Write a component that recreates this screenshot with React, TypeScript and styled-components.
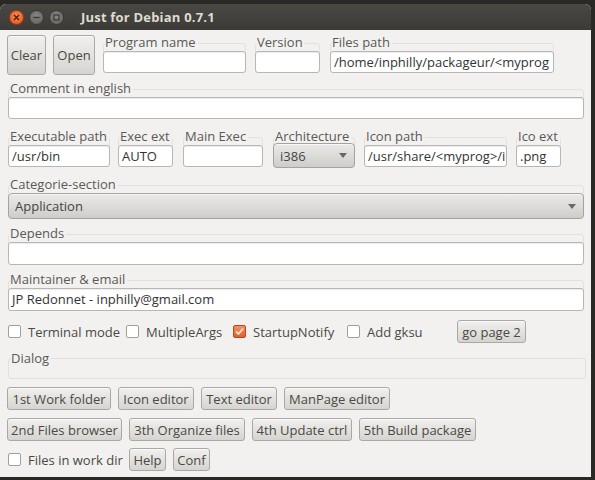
import React from "react";
import styled, { createGlobalStyle } from "styled-components";

const Global = createGlobalStyle`
  html, body { margin: 0; padding: 0; background: #23221f; }
  body { font-family: "Open Sans", "DejaVu Sans", sans-serif; font-size: 13px; color: #3c3c3c; }
`;

const Desktop = styled.div`
  width: 595px;
  height: 480px;
  background: #2a2926;
  padding-top: 4px;
  box-sizing: border-box;
  overflow: hidden;
`;

const Win = styled.div`
  width: 591px;
  height: 473px;
  background: #f2f1f0;
  border-radius: 6px 6px 0 0;
  overflow: hidden;
  display: flex;
  flex-direction: column;
`;

const TitleBar = styled.div`
  height: 26px;
  flex: none;
  background: linear-gradient(#4a4843, #3c3b37);
  display: flex;
  align-items: center;
  padding-left: 9px;
  gap: 5px;
`;

const WinBtn = styled.span<{ $kind: "close" | "min" | "max" }>`
  width: 13px;
  height: 13px;
  border-radius: 50%;
  display: inline-flex;
  align-items: center;
  justify-content: center;
  background: ${(p) =>
    p.$kind === "close"
      ? "radial-gradient(circle at 50% 40%, #f6925c, #dd4e16)"
      : "radial-gradient(circle at 50% 40%, #8a8884, #5e5c58)"};
  border: 1px solid ${(p) => (p.$kind === "close" ? "#a8390e" : "#3a3935")};
`;

const Title = styled.span`
  margin-left: 12px;
  font-family: "Open Sans", "DejaVu Sans", sans-serif;
  font-weight: 700;
  font-size: 13px;
  color: #dfdbd2;
  letter-spacing: 0.2px;
`;

const Body = styled.div`
  padding: 5px 0 0 7px;
  display: flex;
  flex-direction: column;
`;

const Row = styled.div<{ $mt?: number; $gap?: number; $align?: string }>`
  display: flex;
  align-items: ${(p) => p.$align || "flex-start"};
  gap: ${(p) => p.$gap ?? 0}px;
  margin-top: ${(p) => p.$mt ?? 0}px;
`;

const Group = styled.div<{ $w: number; $ml?: number }>`
  width: ${(p) => p.$w}px;
  margin-left: ${(p) => p.$ml ?? 0}px;
  display: flex;
  flex-direction: column;
  position: relative;
  flex: none;
  &::before {
    content: "";
    position: absolute;
    left: 0;
    right: 0;
    top: 8px;
    bottom: 0;
    border: 1px solid #e3e1de;
    border-radius: 3px;
  }
`;

const Label = styled.span`
  align-self: flex-start;
  position: relative;
  height: 15px;
  line-height: 15px;
  margin: 0 0 1px 2px;
  padding-right: 2px;
  background: #f2f1f0;
  color: #5a5955;
  font-size: 13px;
  white-space: nowrap;
`;

const Input = styled.div<{ $h?: number }>`
  position: relative;
  height: ${(p) => p.$h ?? 22}px;
  box-sizing: border-box;
  background: #fff;
  border: 1px solid #b9b7b3;
  border-radius: 3px;
  box-shadow: inset 0 1px 1px rgba(0, 0, 0, 0.08);
  padding: 0 3px;
  line-height: ${(p) => (p.$h ?? 22) - 2}px;
  font-size: 13px;
  color: #333;
  white-space: nowrap;
  overflow: hidden;
`;

const Combo = styled.div<{ $h: number; $mt?: number }>`
  position: relative;
  height: ${(p) => p.$h}px;
  margin-top: ${(p) => p.$mt ?? 0}px;
  box-sizing: border-box;
  background: linear-gradient(#ebeae8, #cfcdca);
  border: 1px solid #a5a39f;
  border-radius: 4px;
  display: flex;
  align-items: center;
  justify-content: space-between;
  padding: 0 7px 0 6px;
  color: #444;
  font-size: 13px;
  box-shadow: inset 0 1px 0 rgba(255, 255, 255, 0.6);
`;

const Arrow = styled.span`
  width: 0;
  height: 0;
  border-left: 4px solid transparent;
  border-right: 4px solid transparent;
  border-top: 5px solid #6a6864;
`;

const Button = styled.button<{ $h?: number; $w?: number; $ml?: number }>`
  height: ${(p) => p.$h ?? 23}px;
  ${(p) => (p.$w ? `width: ${p.$w}px;` : "")}
  margin-left: ${(p) => p.$ml ?? 0}px;
  box-sizing: border-box;
  padding: 0 2px;
  font-family: "Open Sans", "DejaVu Sans", sans-serif;
  font-size: 13px;
  color: #4a4945;
  background: linear-gradient(#f1f0ee, #d6d4d0);
  border: 1px solid #aaa8a4;
  border-radius: 3px;
  box-shadow: inset 0 1px 0 rgba(255, 255, 255, 0.7);
  white-space: nowrap;
  flex: none;
`;

const Check = styled.span<{ $checked?: boolean }>`
  width: 13px;
  height: 13px;
  box-sizing: border-box;
  border-radius: 2px;
  border: 1px solid ${(p) => (p.$checked ? "#b54a1e" : "#a19f9b")};
  background: ${(p) => (p.$checked ? "linear-gradient(#f5925f, #e0602e)" : "#fff")};
  display: inline-flex;
  align-items: center;
  justify-content: center;
  flex: none;
`;

const CheckItem = styled.label<{ $w?: number; $ml?: number }>`
  display: flex;
  align-items: center;
  gap: 7px;
  ${(p) => (p.$w ? `width: ${p.$w}px;` : "")}
  margin-left: ${(p) => p.$ml ?? 0}px;
  color: #4a4945;
  white-space: nowrap;
  flex: none;
`;

const DialogFrame = styled.div`
  width: 578px;
  height: 21px;
  margin-top: 15px;
  margin-left: 1px;
  border: 1px solid #e2e0dd;
  border-radius: 3px;
  position: relative;
  box-sizing: border-box;
`;

const FrameLabel = styled.span`
  position: absolute;
  left: 2px;
  top: -8px;
  background: #f2f1f0;
  color: #5a5955;
  padding-right: 2px;
  line-height: 14px;
`;

const CheckMark = () => (
  <svg width="9" height="9" viewBox="0 0 9 9">
    <path d="M1 4.5 L3.5 7 L8 1.5" stroke="#fbe6dc" strokeWidth="1.8" fill="none" />
  </svg>
);

export default function App() {
  return (
    <>
      <Global />
      <Desktop>
        <Win>
          <TitleBar>
            <WinBtn $kind="close">
              <svg width="7" height="7" viewBox="0 0 7 7">
                <path d="M1 1 L6 6 M6 1 L1 6" stroke="#5a1a04" strokeWidth="1.4" />
              </svg>
            </WinBtn>
            <WinBtn $kind="min">
              <svg width="7" height="3" viewBox="0 0 7 3">
                <path d="M0.5 1.5 H6.5" stroke="#3a3935" strokeWidth="1.4" />
              </svg>
            </WinBtn>
            <WinBtn $kind="max">
              <svg width="7" height="7" viewBox="0 0 7 7">
                <rect x="1" y="1" width="5" height="5" stroke="#3a3935" strokeWidth="1.2" fill="none" />
              </svg>
            </WinBtn>
            <Title>Just for Debian 0.7.1</Title>
          </TitleBar>
          <Body>
            <Row>
              <Button $h={40} $w={39}>Clear</Button>
              <Button $h={40} $w={42} $ml={7}>Open</Button>
              <Group $w={143} $ml={8}>
                <Label>Program name</Label>
                <Input />
              </Group>
              <Group $w={65} $ml={9}>
                <Label>Version</Label>
                <Input />
              </Group>
              <Group $w={224} $ml={10}>
                <Label>Files path</Label>
                <Input>/home/inphilly/packageur/&lt;myprog</Input>
              </Group>
            </Row>

            <Row $mt={6}>
              <Group $w={576} $ml={1}>
                <Label>Comment in english</Label>
                <Input />
              </Group>
            </Row>

            <Row $mt={10}>
              <Group $w={102} $ml={1}>
                <Label>Executable path</Label>
                <Input>/usr/bin</Input>
              </Group>
              <Group $w={55} $ml={8}>
                <Label>Exec ext</Label>
                <Input>AUTO</Input>
              </Group>
              <Group $w={80} $ml={10}>
                <Label>Main Exec</Label>
                <Input />
              </Group>
              <Group $w={82} $ml={10}>
                <Label>Architecture</Label>
                <Combo $h={25} $mt={-2}>
                  <span>i386</span>
                  <Arrow />
                </Combo>
              </Group>
              <Group $w={143} $ml={9}>
                <Label>Icon path</Label>
                <Input>/usr/share/&lt;myprog&gt;/i</Input>
              </Group>
              <Group $w={45} $ml={9}>
                <Label>Ico ext</Label>
                <Input>.png</Input>
              </Group>
            </Row>

            <Row $mt={9}>
              <Group $w={576} $ml={1}>
                <Label>Categorie-section</Label>
                <Combo $h={26}>
                  <span>Application</span>
                  <Arrow />
                </Combo>
              </Group>
            </Row>

            <Row $mt={7}>
              <Group $w={576} $ml={1}>
                <Label>Depends</Label>
                <Input $h={23} />
              </Group>
            </Row>

            <Row $mt={7}>
              <Group $w={576} $ml={1}>
                <Label>Maintainer &amp; email</Label>
                <Input $h={23}>JP Redonnet - inphilly@gmail.com</Input>
              </Group>
            </Row>

            <Row $mt={9} $align="center">
              <CheckItem $w={118} $ml={1}>
                <Check />
                Terminal mode
              </CheckItem>
              <CheckItem $w={107}>
                <Check />
                MultipleArgs
              </CheckItem>
              <CheckItem $w={114}>
                <Check $checked>
                  <CheckMark />
                </Check>
                StartupNotify
              </CheckItem>
              <CheckItem $w={110}>
                <Check />
                Add gksu
              </CheckItem>
              <Button $h={23} $w={69}>go page 2</Button>
            </Row>

            <DialogFrame>
              <FrameLabel>Dialog</FrameLabel>
            </DialogFrame>

            <Row $mt={8} $gap={7}>
              <Button $w={104}>1st Work folder</Button>
              <Button $w={76}>Icon editor</Button>
              <Button $w={76}>Text editor</Button>
              <Button $w={106}>ManPage editor</Button>
            </Row>
            <Row $mt={8} $gap={7}>
              <Button $w={115}>2nd Files browser</Button>
              <Button $w={116}>3th Organize files</Button>
              <Button $w={100}>4th Update ctrl</Button>
              <Button $w={117}>5th Build package</Button>
            </Row>
            <Row $mt={7} $align="center">
              <CheckItem $w={121} $ml={1}>
                <Check />
                Files in work dir
              </CheckItem>
              <Button $w={37}>Help</Button>
              <Button $w={37} $ml={7}>Conf</Button>
            </Row>
          </Body>
        </Win>
      </Desktop>
    </>
  );
}
